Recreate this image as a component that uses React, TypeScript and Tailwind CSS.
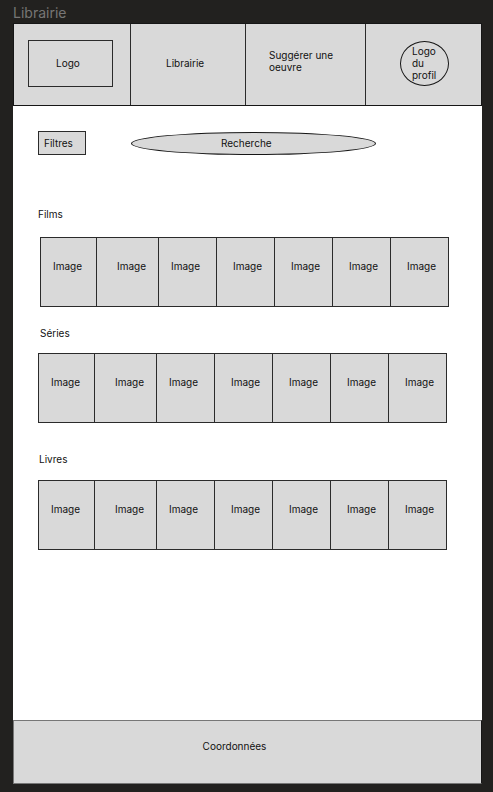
type Cell = { id: number; pad: string };

const cells: Cell[] = [
  { id: 1, pad: "pl-3" },
  { id: 2, pad: "pl-5" },
  { id: 3, pad: "pl-3" },
  { id: 4, pad: "pl-4" },
  { id: 5, pad: "pl-4" },
  { id: 6, pad: "pl-4" },
  { id: 7, pad: "pl-4" },
];

function Gallery({ label }: { label: string }) {
  return (
    <ul
      aria-label={label}
      className="grid h-[70px] grid-cols-[56fr_62fr_58fr_58fr_58fr_58fr_57fr] border border-[#2b2b2b] bg-[#d9d9d9]"
    >
      {cells.map((cell) => (
        <li
          key={cell.id}
          className={`border-r border-[#2b2b2b] pt-[22px] last:border-r-0 ${cell.pad}`}
        >
          Image
        </li>
      ))}
    </ul>
  );
}

export default function App() {
  return (
    <div className="flex min-h-screen flex-col bg-[#22211f] pr-[11px] pb-2 pl-[13px] font-['Inter',sans-serif] text-[10px] leading-3 text-[#111111]">
      <p className="h-[23px] pt-1 text-sm leading-[18px] text-[#777675]">Librairie</p>
      <div className="flex grow flex-col bg-white">
        <header className="border border-[#161616] bg-[#d9d9d9]">
          <nav className="grid h-[81px] grid-cols-[117fr_115fr_120fr_115fr]">
            <div className="flex items-center border-r border-[#2b2b2b] pb-0.5 pl-[14px]">
              <a
                href="#logo"
                className="flex h-[47px] w-[85px] items-center border border-[#2b2b2b] pb-0.5 pl-[27px]"
              >
                Logo
              </a>
            </div>
            <div className="flex items-center border-r border-[#2b2b2b] pb-1 pl-[35px]">
              <a href="#librairie">Librairie</a>
            </div>
            <div className="flex items-center border-r border-[#2b2b2b] pr-6 pb-[7px] pl-[23px]">
              <a href="#suggerer">Suggérer une oeuvre</a>
            </div>
            <div className="flex items-center pb-0.5 pl-[34px]">
              <button
                type="button"
                className="flex h-[45px] w-[49px] items-center rounded-[50%] border border-[#161616] pr-2 pb-0.5 pl-[11px] text-left"
              >
                Logo du profil
              </button>
            </div>
          </nav>
        </header>

        <main className="grow pt-[25px] pr-[35px] pb-10 pl-[25px]">
          <form className="flex items-center" role="search">
            <button
              type="button"
              className="h-6 w-12 shrink-0 border border-[#2b2b2b] bg-[#d9d9d9] pl-[5px] text-left"
            >
              Filtres
            </button>
            <input
              type="search"
              aria-label="Recherche"
              placeholder="Recherche"
              className="ml-[45px] h-[23px] w-3/5 rounded-[50%] border border-[#161616] bg-[#d9d9d9] pr-4 pl-[89px] placeholder:text-[#111111] placeholder:opacity-100"
            />
          </form>

          <h2 className="mt-[53px] mb-[17px]">Films</h2>
          <div className="-mr-0.5 ml-0.5">
            <Gallery label="Films" />
          </div>

          <h2 className="mt-5 mb-[14px] ml-0.5">Séries</h2>
          <Gallery label="Séries" />

          <h2 className="mt-[30px] mb-[15px] ml-px">Livres</h2>
          <Gallery label="Livres" />
        </main>

        <footer className="h-16 border border-[#777777] border-r-[#161616] bg-[#d9d9d9] pt-[19px] pr-[26px] text-center">
          Coordonnées
        </footer>
      </div>
    </div>
  );
}
